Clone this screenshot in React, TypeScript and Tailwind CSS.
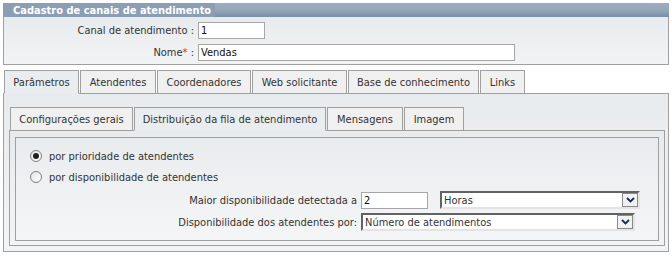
import React from "react";

function Tab({ label, w, active }: { label: string; w: string; active?: boolean }) {
  return (
    <div
      className={
        w +
        " h-[24px] -mb-px flex items-center justify-center border border-[#a0a0a0] whitespace-nowrap " +
        (active ? "relative z-10 bg-[#eaedef] border-b-[#eaedef]" : "bg-[#f0f0f0]")
      }
    >
      {label}
    </div>
  );
}

function Chevron() {
  return (
    <svg width="9" height="6" viewBox="0 0 9 6">
      <polyline points="1,1 4.5,4.5 8,1" fill="none" stroke="#1b2a55" strokeWidth="1.8" />
    </svg>
  );
}

function Select({ value, w }: { value: string; w: string }) {
  return (
    <div
      className={
        w +
        " h-[18px] flex items-stretch border-2 border-t-[#626262] border-l-[#626262] border-b-[#e4e4e4] border-r-[#e4e4e4] bg-white"
      }
    >
      <div className="flex-1 flex items-center px-[2px] leading-none">{value}</div>
      <div className="w-[16px] flex items-center justify-center border border-[#8a8a8a] bg-[#f2f2f2]">
        <Chevron />
      </div>
    </div>
  );
}

function Radio({ checked }: { checked?: boolean }) {
  return (
    <div className="w-[12px] h-[12px] rounded-full border border-[#7d7d7d] bg-gradient-to-br from-[#e6e6e6] to-white flex items-center justify-center">
      {checked && <div className="w-[6px] h-[6px] rounded-full bg-[#1e1e1e]" />}
    </div>
  );
}

export default function App() {
  return (
    <div className="w-[672px] h-[255px] bg-white px-[3px] pt-[3px] text-[11px] text-[#333] font-['DejaVu_Sans_Condensed','DejaVu_Sans',sans-serif] leading-none overflow-hidden">
      {/* header */}
      <div className="h-[14px] flex bg-gradient-to-b from-[#9cadbf] via-[#95a7ba] to-[#7a8ea6]">
        <div className="h-full flex items-center pl-[10px] pr-[4px] bg-[#8c9eb4] text-white font-bold whitespace-nowrap">
          Cadastro de canais de atendimento
        </div>
        <div className="flex-1" />
      </div>
      {/* form box */}
      <div className="h-[48px] border-x border-b border-[#a0a0a0] bg-gradient-to-b from-[#e8ebed] to-[#f2f3f4] pt-[5px]">
        <div className="grid grid-cols-[190px_auto] gap-x-[4px] gap-y-[5px] items-center">
          <div className="text-right whitespace-nowrap">Canal de atendimento :</div>
          <div className="w-[67px] h-[17px] border border-[#a6a6a6] bg-white flex items-center px-[2px] text-[#111]">1</div>
          <div className="text-right whitespace-nowrap">
            Nome<span className="text-[#e0202a]">*</span> :
          </div>
          <div className="w-[317px] h-[17px] border border-[#a6a6a6] bg-white flex items-center px-[2px] text-[#111]">Vendas</div>
        </div>
      </div>
      {/* top tabs */}
      <div className="mt-[5px] flex gap-[1px] pl-[1px]">
        <Tab label="Parâmetros" w="w-[75px]" active />
        <Tab label="Atendentes" w="w-[76px]" />
        <Tab label="Coordenadores" w="w-[94px]" />
        <Tab label="Web solicitante" w="w-[95px]" />
        <Tab label="Base de conhecimento" w="w-[131px]" />
        <Tab label="Links" w="w-[45px]" />
      </div>
      <div className="h-[159px] border border-[#a0a0a0] bg-gradient-to-b from-[#e8ebed] to-[#f3f4f5] pt-[13px] pl-[5px] pr-[3px] pb-[5px] flex flex-col">
        <div className="flex gap-[1px] pl-[1px]">
          <Tab label="Configurações gerais" w="w-[123px]" />
          <Tab label="Distribuição da fila de atendimento" w="w-[192px]" active />
          <Tab label="Mensagens" w="w-[76px]" />
          <Tab label="Imagem" w="w-[60px]" />
        </div>
        <div className="flex-1 border border-[#a0a0a0] bg-gradient-to-b from-[#e8ebed] to-[#f3f4f5] pt-[6px] px-[5px] pb-[4px] flex flex-col">
          <div className="flex-1 border border-[#a0a0a0] bg-gradient-to-b from-[#e9ecee] to-[#f4f5f6] pt-[10px]">
            <div className="pl-[14px] h-[16px] flex items-center gap-[7px]">
              <Radio checked />
              <span>por prioridade de atendentes</span>
            </div>
            <div className="pl-[14px] mt-[5px] h-[16px] flex items-center gap-[7px]">
              <Radio />
              <span>por disponibilidade de atendentes</span>
            </div>
            <div className="mt-[6px] grid grid-cols-[341px_auto] gap-x-[4px] gap-y-[4px] items-center">
              <div className="text-right whitespace-nowrap">Maior disponibilidade detectada a</div>
              <div className="flex items-center">
                <div className="w-[67px] h-[17px] border border-[#a6a6a6] bg-white flex items-center px-[2px] text-[#111]">2</div>
                <div className="ml-[12px]">
                  <Select value="Horas" w="w-[200px]" />
                </div>
              </div>
              <div className="text-right whitespace-nowrap">Disponibilidade dos atendentes por:</div>
              <Select value="Número de atendimentos" w="w-[274px]" />
            </div>
          </div>
        </div>
      </div>
    </div>
  );
}
